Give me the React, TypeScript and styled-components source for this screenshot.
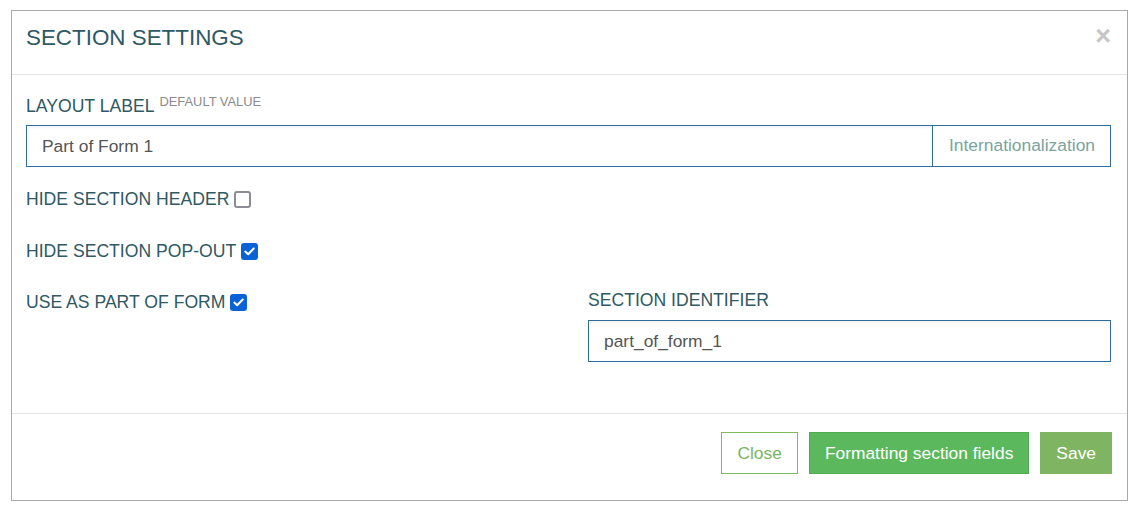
import React, { useState } from 'react'
import styled, { createGlobalStyle } from 'styled-components'

const GlobalStyle = createGlobalStyle`
  html, body {
    margin: 0;
    padding: 0;
    background: #ffffff;
    font-family: 'Liberation Sans', Arial, sans-serif;
  }
`

const Page = styled.div`
  padding: 10px 13px 10px 11px;
`

const Modal = styled.div`
  border: 1px solid #a9a9a9;
  background: #ffffff;
  display: flex;
  flex-direction: column;
`

const Header = styled.div`
  height: 64px;
  box-sizing: border-box;
  display: flex;
  align-items: flex-start;
  justify-content: space-between;
  padding: 14px 16px 0 14px;
  border-bottom: 1px solid #e5e5e5;
`

const Title = styled.h4`
  margin: 0;
  font-size: 22.4px;
  line-height: 26px;
  font-weight: 400;
  color: #2f5963;
`

const CloseX = styled.button`
  background: none;
  border: none;
  padding: 0;
  margin-top: -2px;
  font-family: 'Liberation Sans', Arial, sans-serif;
  font-size: 27px;
  font-weight: 700;
  line-height: 1;
  color: #c6c6c6;
  cursor: pointer;
`

const Body = styled.div`
  padding: 15px 16px 51px 14px;
`

const FieldLabel = styled.div`
  height: 24px;
  line-height: 24px;
  font-size: 17.6px;
  color: #2f5963;
  margin-bottom: 11px;
  white-space: nowrap;
`

const Sup = styled.span`
  font-size: 12.9px;
  color: #8a8a8a;
  vertical-align: 6px;
  margin-left: 5px;
`

const InputGroup = styled.div`
  display: flex;
  height: 42px;
  margin-bottom: 20px;
`

const TextInput = styled.input`
  flex: 1;
  min-width: 0;
  height: 42px;
  box-sizing: border-box;
  border: 1px solid #2d6c9c;
  padding: 0 15px;
  font-family: 'Liberation Sans', Arial, sans-serif;
  font-size: 17.4px;
  color: #555555;
  outline: none;
  box-shadow: inset 0 2px 2px rgba(0, 0, 0, 0.04);
`

const Addon = styled.div`
  display: flex;
  align-items: center;
  height: 42px;
  box-sizing: border-box;
  border: 1px solid #2d6c9c;
  border-left: none;
  padding: 0 15px 1px 16px;
  font-size: 17.4px;
  color: #7aa49d;
`

const CheckRow = styled.label<{ gap: number }>`
  display: flex;
  align-items: center;
  height: 24px;
  margin-bottom: ${(p) => p.gap}px;
  font-size: 17.6px;
  color: #2f5963;
  white-space: nowrap;
  cursor: pointer;
`

const Box = styled.span<{ checked: boolean }>`
  display: inline-flex;
  align-items: center;
  justify-content: center;
  width: 17px;
  height: 17px;
  box-sizing: border-box;
  margin-left: 5px;
  border-radius: 3px;
  border: ${(p) => (p.checked ? 'none' : '2px solid #8c8c96')};
  background: ${(p) => (p.checked ? '#0b62d6' : '#ffffff')};
`

const Columns = styled.div`
  display: grid;
  grid-template-columns: 1fr 523px;
  column-gap: 38px;
  align-items: start;
`

const IdentifierLabel = styled(FieldLabel)`
  margin-top: -2px;
  margin-bottom: 8px;
`

const IdentInput = styled(TextInput)`
  width: 100%;
  flex: none;
`

const Footer = styled.div`
  border-top: 1px solid #e5e5e5;
  height: 87px;
  box-sizing: border-box;
  padding: 18px 15px 0 0;
  display: flex;
  justify-content: flex-end;
  align-items: flex-start;
  gap: 11px;
`

const Button = styled.button<{ variant: 'outline' | 'primary' | 'save' }>`
  height: 42px;
  box-sizing: border-box;
  padding: 0 15px;
  font-family: 'Liberation Sans', Arial, sans-serif;
  font-size: 17.4px;
  border-radius: 0;
  cursor: pointer;
  border: 1px solid
    ${(p) => (p.variant === 'outline' ? '#7dba62' : p.variant === 'primary' ? '#4cae4c' : '#7fb562')};
  background: ${(p) => (p.variant === 'outline' ? '#ffffff' : p.variant === 'primary' ? '#5cb85c' : '#7fb562')};
  color: ${(p) => (p.variant === 'outline' ? '#78b65d' : '#ffffff')};
`

const Check = () => (
  <svg width="11" height="9" viewBox="0 0 11 9">
    <path d="M1.3 4.6 L4.2 7.3 L9.7 1.5" fill="none" stroke="#fff" strokeWidth="2" strokeLinecap="round" strokeLinejoin="round" />
  </svg>
)

const CheckBox: React.FC<{ checked: boolean; onToggle: () => void }> = ({ checked, onToggle }) => (
  <Box checked={checked} onClick={onToggle}>
    {checked && <Check />}
  </Box>
)

export default function App() {
  const [hideHeader, setHideHeader] = useState(false)
  const [hidePopout, setHidePopout] = useState(true)
  const [partOfForm, setPartOfForm] = useState(true)

  return (
    <Page>
      <GlobalStyle />
      <Modal>
        <Header>
          <Title>SECTION SETTINGS</Title>
          <CloseX>×</CloseX>
        </Header>

        <Body>
          <FieldLabel>
            LAYOUT LABEL<Sup>DEFAULT VALUE</Sup>
          </FieldLabel>
          <InputGroup>
            <TextInput defaultValue="Part of Form 1" />
            <Addon>Internationalization</Addon>
          </InputGroup>

          <CheckRow gap={28}>
            HIDE SECTION HEADER
            <CheckBox checked={hideHeader} onToggle={() => setHideHeader(!hideHeader)} />
          </CheckRow>
          <CheckRow gap={27}>
            HIDE SECTION POP-OUT
            <CheckBox checked={hidePopout} onToggle={() => setHidePopout(!hidePopout)} />
          </CheckRow>

          <Columns>
            <CheckRow gap={0}>
              USE AS PART OF FORM
              <CheckBox checked={partOfForm} onToggle={() => setPartOfForm(!partOfForm)} />
            </CheckRow>
            <div>
              <IdentifierLabel>SECTION IDENTIFIER</IdentifierLabel>
              <IdentInput defaultValue="part_of_form_1" />
            </div>
          </Columns>
        </Body>

        <Footer>
          <Button variant="outline">Close</Button>
          <Button variant="primary">Formatting section fields</Button>
          <Button variant="save">Save</Button>
        </Footer>
      </Modal>
    </Page>
  )
}
